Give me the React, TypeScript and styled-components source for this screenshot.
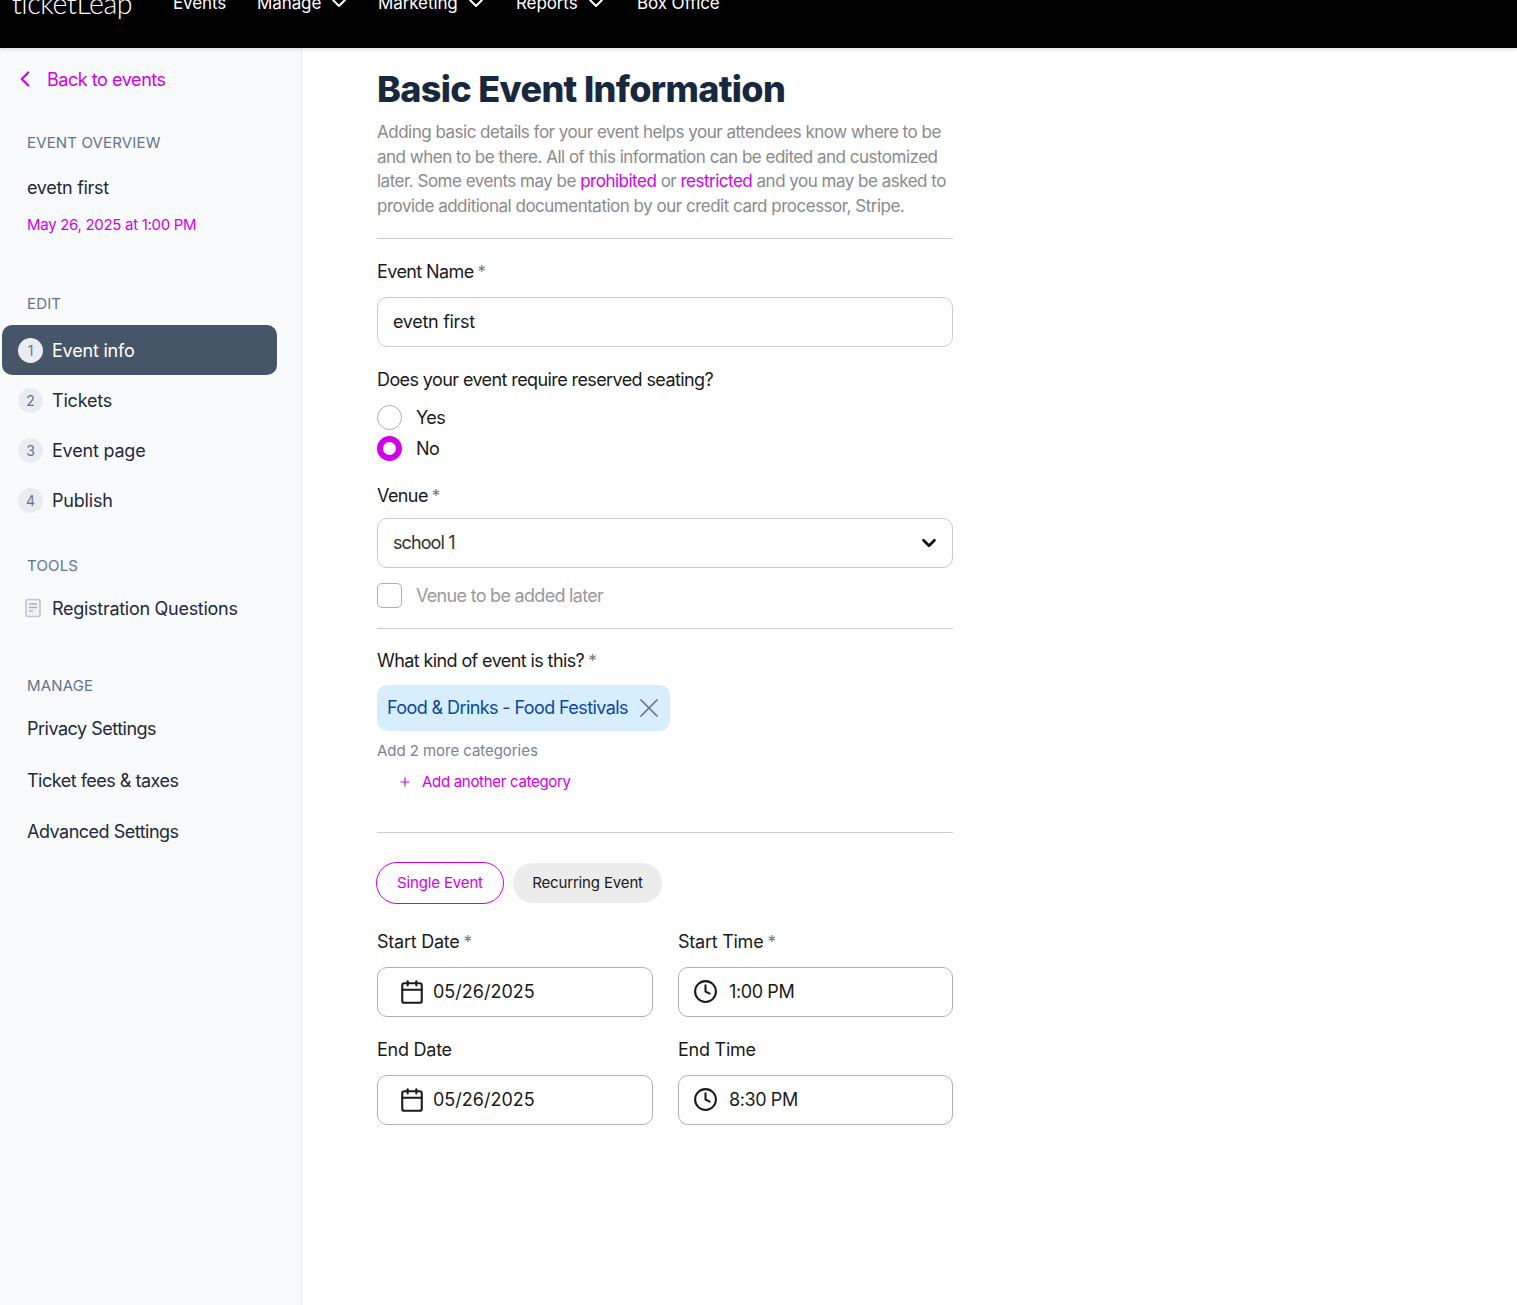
import styled, { createGlobalStyle } from "styled-components";
import { Calendar, ChevronDown, ChevronLeft, Clock, Plus, X } from "lucide-react";

const MAGENTA = "#d100e8";
const INK = "#1a1a1a";
const FONT = `"Inter", "Noto Sans", "Liberation Sans", sans-serif`;

const GlobalStyle = createGlobalStyle`
	html, body {
		margin: 0;
		padding: 0;
		background: #fff;
		font-family: ${FONT};
		color: ${INK};
	}
	* {
		box-sizing: border-box;
	}
`;

const Page = styled.div`
	width: 1517px;
	height: 1305px;
	overflow: hidden;
	display: flex;
	flex-direction: column;
`;

const Header = styled.header`
	height: 48px;
	flex: none;
	background: #000;
	overflow: hidden;
	box-shadow: 0 1px 4px rgba(0, 0, 0, 0.15);
	position: relative;
	z-index: 1;
`;

const HeaderRow = styled.nav`
	display: flex;
	align-items: center;
	height: 24px;
	margin-top: -9px;
	padding-left: 12px;
	color: #fff;
	font-size: 17px;
`;

const Logo = styled.span`
	width: 161px;
	flex: none;
	font-size: 28.5px;
	font-weight: 300;
	letter-spacing: -0.4px;
	font-family: "Lato", sans-serif;
`;

const NavItem = styled.span<{ $width: number }>`
	width: ${(p) => p.$width}px;
	flex: none;
	display: flex;
	align-items: center;
	gap: 6px;
	letter-spacing: -0.1px;
	white-space: nowrap;
`;

const Body = styled.div`
	display: flex;
	flex: 1;
	min-height: 0;
`;

const Sidebar = styled.aside`
	width: 302px;
	flex: none;
	background: #f9fafc;
	border-right: 1px solid #e4e7ec;
	padding: 19px 0 0 2px;
`;

const BackLink = styled.div`
	display: flex;
	align-items: center;
	height: 24px;
	color: ${MAGENTA};
	font-size: 18px;
	letter-spacing: -0.45px;
	padding-left: 10px;
	gap: 9px;
	margin-bottom: 43px;
`;

const SectionLabel = styled.div<{ $after: number }>`
	height: 18px;
	line-height: 18px;
	padding-left: 25px;
	font-size: 15px;
	letter-spacing: 0.15px;
	color: #64748b;
	margin-bottom: ${(p) => p.$after}px;
`;

const EventName = styled.div`
	padding-left: 25px;
	font-size: 18px;
	letter-spacing: -0.3px;
	height: 24px;
	line-height: 24px;
	color: #1e293b;
	margin-bottom: 15px;
`;

const EventDate = styled.div`
	padding-left: 25px;
	font-size: 15px;
	letter-spacing: -0.3px;
	height: 20px;
	line-height: 20px;
	color: ${MAGENTA};
	margin-bottom: 60px;
`;

const Steps = styled.div`
	display: flex;
	flex-direction: column;
	margin-bottom: 32px;
`;

const Step = styled.div<{ $active?: boolean }>`
	width: 275px;
	height: 50px;
	display: flex;
	align-items: center;
	gap: 9px;
	padding-left: 16px;
	border-radius: 10px;
	font-size: 18px;
	letter-spacing: -0.2px;
	background: ${(p) => (p.$active ? "#475569" : "transparent")};
	color: ${(p) => (p.$active ? "#fff" : "#1e293b")};
`;

const StepNumber = styled.span`
	width: 25px;
	height: 25px;
	border-radius: 50%;
	background: #e9edf2;
	color: #64748b;
	font-size: 14px;
	display: flex;
	align-items: center;
	justify-content: center;
`;

const ToolRow = styled.div`
	display: flex;
	align-items: center;
	height: 24px;
	gap: 10px;
	padding-left: 22px;
	font-size: 18px;
	letter-spacing: -0.28px;
	color: #1e293b;
	margin-bottom: 57px;
`;

const ManageList = styled.div`
	display: flex;
	flex-direction: column;
	gap: 27.5px;
`;

const ManageItem = styled.div`
	height: 24px;
	line-height: 24px;
	padding-left: 25px;
	font-size: 18px;
	letter-spacing: -0.5px;
	color: #1e293b;
`;

const Main = styled.main`
	flex: 1;
	padding: 19px 0 0 75px;
`;

const Form = styled.div`
	width: 576px;
`;

const Title = styled.h1`
	margin: 0 0 9px;
	height: 44px;
	line-height: 44px;
	font-size: 36px;
	font-weight: 800;
	letter-spacing: -0.66px;
	color: #18293f;
	white-space: nowrap;
`;

const Intro = styled.p`
	margin: 0 0 19px;
	font-size: 17px;
	line-height: 24.7px;
	letter-spacing: -0.5px;
	color: #8a8a8a;
	white-space: nowrap;
`;

const Accent = styled.span`
	color: ${MAGENTA};
`;

const Divider = styled.hr<{ $after: number }>`
	margin: 0 0 ${(p) => p.$after}px;
	border: 0;
	border-top: 1px solid #c9ccd3;
`;

const Label = styled.div<{ $after: number }>`
	height: 24px;
	line-height: 24px;
	font-size: 18px;
	letter-spacing: -0.6px;
	color: ${INK};
	margin-bottom: ${(p) => p.$after}px;
	white-space: nowrap;
`;

const DateLabel = styled(Label)`
	letter-spacing: -0.25px;
`;

const Required = styled.span`
	color: #777;
	font-size: 17px;
	margin-left: 4px;
`;

const Field = styled.div<{ $after?: number; $grey?: boolean }>`
	height: 50px;
	display: flex;
	align-items: center;
	justify-content: space-between;
	padding: 0 15px;
	border: 1px solid ${(p) => (p.$grey ? "#aeb0b5" : "#c5cad3")};
	border-radius: 10px;
	background: #fff;
	font-size: 18px;
	letter-spacing: -0.3px;
	margin-bottom: ${(p) => p.$after ?? 0}px;
`;

const SelectField = styled(Field)`
	padding-right: 12px;
	letter-spacing: -0.9px;
	color: #333;
`;

const RadioRow = styled.div<{ $after: number }>`
	display: flex;
	align-items: center;
	gap: 14px;
	height: 25px;
	font-size: 18px;
	letter-spacing: -0.5px;
	margin-bottom: ${(p) => p.$after}px;
`;

const Radio = styled.span<{ $checked?: boolean }>`
	width: 25px;
	height: 25px;
	border-radius: 50%;
	background: #fff;
	border: ${(p) => (p.$checked ? `6.5px solid ${MAGENTA}` : "1px solid #aeb0b5")};
`;

const Checkbox = styled.span`
	width: 25px;
	height: 25px;
	border-radius: 5px;
	border: 1px solid #aeb0b5;
	background: #fff;
`;

const MutedText = styled.span`
	color: #999;
	letter-spacing: -0.7px;
`;

const Chip = styled.div`
	width: 293px;
	height: 46px;
	display: flex;
	align-items: center;
	justify-content: space-between;
	padding: 0 5px 0 10px;
	border-radius: 10px;
	background: #d6eefe;
	color: #0d47a1;
	font-size: 18px;
	letter-spacing: -0.6px;
	white-space: nowrap;
	margin-bottom: 10px;
`;

const Hint = styled.div`
	height: 20px;
	line-height: 20px;
	font-size: 15px;
	letter-spacing: -0.05px;
	color: #7a8391;
	margin-bottom: 11px;
`;

const AddCategory = styled.div`
	display: flex;
	align-items: center;
	gap: 10px;
	height: 20px;
	padding-left: 21px;
	font-size: 15px;
	letter-spacing: -0.3px;
	color: ${MAGENTA};
	margin-bottom: 40px;
`;

const TypeRow = styled.div`
	display: flex;
	align-items: center;
	gap: 9px;
	margin-bottom: 26px;
`;

const TypeButton = styled.div<{ $active?: boolean; $width: number }>`
	width: ${(p) => p.$width}px;
	height: ${(p) => (p.$active ? 42 : 40)}px;
	margin-left: ${(p) => (p.$active ? -1 : 0)}px;
	border-radius: 21px;
	display: flex;
	align-items: center;
	justify-content: center;
	font-size: 15px;
	letter-spacing: -0.15px;
	border: ${(p) => (p.$active ? `1px solid ${MAGENTA}` : "0")};
	color: ${(p) => (p.$active ? MAGENTA : INK)};
	background: ${(p) => (p.$active ? "#fff" : "#ececec")};
`;

const DateGrid = styled.div`
	display: grid;
	grid-template-columns: 276px 275px;
	column-gap: 25px;
`;

const DateCell = styled.div<{ $after?: number }>`
	margin-bottom: ${(p) => p.$after ?? 0}px;
`;

const DateField = styled(Field)`
	justify-content: flex-start;
	gap: 8px;
	padding-left: 21px;
	letter-spacing: 0;
`;

const TimeField = styled(DateField)`
	gap: 11px;
	padding-left: 14px;
	letter-spacing: -0.4px;
`;

function FormIcon() {
	return (
		<svg width="18" height="20" viewBox="0 0 18 20" fill="none" style={{ flex: "none" }}>
			<rect x="2" y="1.5" width="14" height="17" rx="2" fill="#f1f3f6" stroke="#bcc5d0" strokeWidth="1.6" />
			<path d="M5 6h8M5 9.5h8M5 13h4" stroke="#a6b0bd" strokeWidth="1.3" />
		</svg>
	);
}

const steps = ["Event info", "Tickets", "Event page", "Publish"];

export default function App() {
	return (
		<Page>
			<GlobalStyle />
			<Header>
				<HeaderRow>
					<Logo>ticketLeap</Logo>
					<NavItem $width={84}>Events</NavItem>
					<NavItem $width={121}>
						Manage <ChevronDown size={24} />
					</NavItem>
					<NavItem $width={138}>
						Marketing <ChevronDown size={24} />
					</NavItem>
					<NavItem $width={121}>
						Reports <ChevronDown size={24} />
					</NavItem>
					<NavItem $width={90}>Box Office</NavItem>
				</HeaderRow>
			</Header>
			<Body>
				<Sidebar>
					<BackLink>
						<ChevronLeft size={26} strokeWidth={2} />
						Back to events
					</BackLink>
					<SectionLabel $after={24}>EVENT OVERVIEW</SectionLabel>
					<EventName>evetn first</EventName>
					<EventDate>May 26, 2025 at 1:00 PM</EventDate>
					<SectionLabel $after={12}>EDIT</SectionLabel>
					<Steps>
						{steps.map((step, i) => (
							<Step key={step} $active={i === 0}>
								<StepNumber>{i + 1}</StepNumber>
								{step}
							</Step>
						))}
					</Steps>
					<SectionLabel $after={21}>TOOLS</SectionLabel>
					<ToolRow>
						<FormIcon />
						Registration Questions
					</ToolRow>
					<SectionLabel $after={22}>MANAGE</SectionLabel>
					<ManageList>
						<ManageItem>Privacy Settings</ManageItem>
						<ManageItem>Ticket fees &amp; taxes</ManageItem>
						<ManageItem>Advanced Settings</ManageItem>
					</ManageList>
				</Sidebar>
				<Main>
					<Form>
						<Title>Basic Event Information</Title>
						<Intro>
							Adding basic details for your event helps your attendees know where to be
							<br />
							and when to be there. All of this information can be edited and customized
							<br />
							later. Some events may be <Accent>prohibited</Accent> or <Accent>restricted</Accent> and you may be asked to
							<br />
							provide additional documentation by our credit card processor, Stripe.
						</Intro>
						<Divider $after={21} />
						<Label $after={13}>
							Event Name<Required>*</Required>
						</Label>
						<Field $after={21}>evetn first</Field>
						<Label $after={13}>Does your event require reserved seating?</Label>
						<RadioRow $after={6}>
							<Radio />
							Yes
						</RadioRow>
						<RadioRow $after={23}>
							<Radio $checked />
							No
						</RadioRow>
						<Label $after={10}>
							Venue<Required>*</Required>
						</Label>
						<SelectField $after={15}>
							school 1
							<ChevronDown size={22} strokeWidth={3} color="#111" />
						</SelectField>
						<RadioRow $after={20}>
							<Checkbox />
							<MutedText>Venue to be added later</MutedText>
						</RadioRow>
						<Divider $after={20} />
						<Label $after={12}>
							What kind of event is this?<Required>*</Required>
						</Label>
						<Chip>
							Food &amp; Drinks - Food Festivals
							<X size={32} strokeWidth={1.3} color="#6b7480" />
						</Chip>
						<Hint>Add 2 more categories</Hint>
						<AddCategory>
							<Plus size={14} />
							Add another category
						</AddCategory>
						<Divider $after={29} />
						<TypeRow>
							<TypeButton $active $width={128}>
								Single Event
							</TypeButton>
							<TypeButton $width={149}>Recurring Event</TypeButton>
						</TypeRow>
						<DateGrid>
							<DateCell $after={21}>
								<DateLabel $after={13}>
									Start Date<Required>*</Required>
								</DateLabel>
								<DateField $grey>
									<Calendar size={26} strokeWidth={1.9} />
									05/26/2025
								</DateField>
							</DateCell>
							<DateCell $after={21}>
								<DateLabel $after={13}>
									Start Time<Required>*</Required>
								</DateLabel>
								<TimeField $grey>
									<Clock size={25} />
									1:00 PM
								</TimeField>
							</DateCell>
							<DateCell>
								<DateLabel $after={13}>End Date</DateLabel>
								<DateField $grey>
									<Calendar size={26} strokeWidth={1.9} />
									05/26/2025
								</DateField>
							</DateCell>
							<DateCell>
								<DateLabel $after={13}>End Time</DateLabel>
								<TimeField $grey>
									<Clock size={25} />
									8:30 PM
								</TimeField>
							</DateCell>
						</DateGrid>
					</Form>
				</Main>
			</Body>
		</Page>
	);
}
